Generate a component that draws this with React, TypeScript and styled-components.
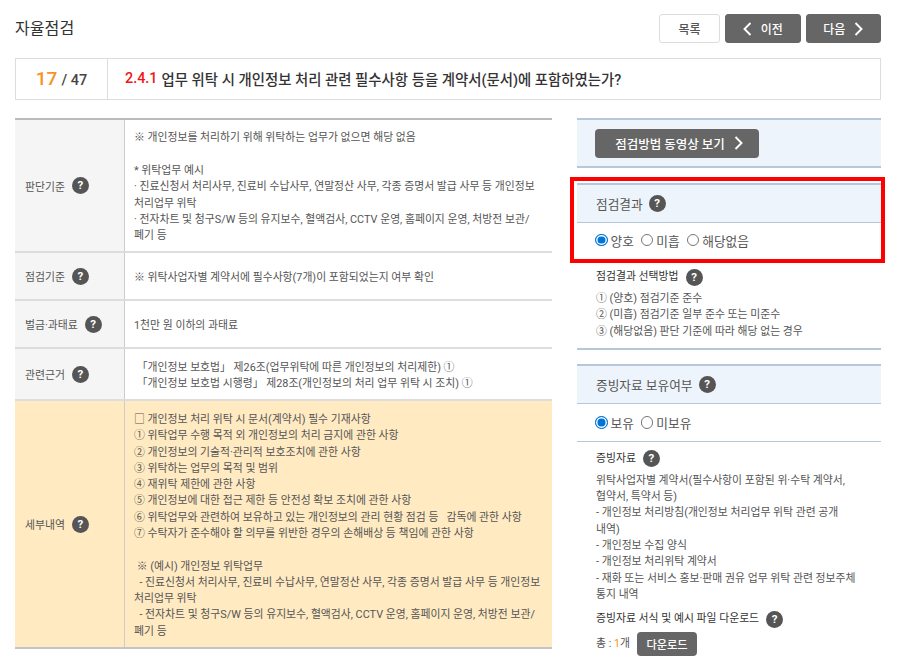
import React from "react";
import styled, { createGlobalStyle } from "styled-components";

const Global = createGlobalStyle`
  html, body { margin: 0; padding: 0; background: #fff; }
  body { font-family: Roboto, "Noto Sans CJK KR", sans-serif; color: #555; font-size: 10.85px; overflow: hidden; }
`;

const Page = styled.div`
  width: 866px;
  height: 671px;
  padding: 14px 16px 0 15px;
  overflow: hidden;
`;

const Top = styled.div`
  display: flex;
  justify-content: space-between;
  align-items: flex-start;
  height: 30px;
`;

const Title = styled.h1`
  margin: 0;
  font-size: 16.1px;
  line-height: 30px;
  font-weight: 400;
  color: #333;
`;

const Buttons = styled.div`
  display: flex;
  gap: 5px;
`;

const NavButton = styled.button<{ $light?: boolean }>`
  width: ${(p) => (p.$light ? 61 : 75.5)}px;
  height: 29px;
  box-sizing: border-box;
  border-radius: 3px;
  border: 1px solid ${(p) => (p.$light ? "#ddd" : "#666")};
  background: ${(p) => (p.$light ? "#fff" : "#666")};
  color: ${(p) => (p.$light ? "#555" : "#fff")};
  font: 500 12px Roboto, "Noto Sans CJK KR", sans-serif;
  display: flex;
  align-items: center;
  justify-content: center;
  gap: 9px;
  padding: 0;
`;

const Question = styled.div`
  display: flex;
  height: 42px;
  box-sizing: border-box;
  margin-top: 14px;
  border: 1px solid #ddd;
  align-items: stretch;
`;

const Counter = styled.div`
  width: 91px;
  border-right: 1px solid #ddd;
  display: flex;
  align-items: baseline;
  justify-content: center;
  font-size: 14.5px;
  line-height: 40px;
  font-weight: 500;
  color: #444;
  gap: 4px;
  b { color: #f7931e; font-size: 19px; font-weight: 500; }
`;

const QuestionText = styled.div`
  flex: 1;
  display: flex;
  align-items: center;
  padding: 0 0 1px 17px;
  font-size: 14.4px;
  font-weight: 500;
  color: #333;
  span { color: #f01414; margin-right: 4px; }
`;

const Columns = styled.div`
  display: flex;
  gap: 25px;
  margin-top: 18px;
  align-items: flex-start;
`;

const Table = styled.div`
  width: 537px;
  border-top: 2px solid #bbb;
`;

const Row = styled.div<{ $h: number; $accent?: boolean }>`
  display: flex;
  min-height: ${(p) => p.$h}px;
  border-bottom: ${(p) => (p.$accent ? "2px solid #c4c4c4" : "2px solid #ddd")};
  background: ${(p) => (p.$accent ? "#ffeac2" : "#fff")};
`;

const Label = styled.div<{ $accent?: boolean }>`
  width: 110px;
  flex: none;
  background: ${(p) => (p.$accent ? "#ffeac2" : "#f5f5f5")};
  border-right: 1px solid #ccc;
  display: flex;
  align-items: center;
  padding-left: 10px;
  box-sizing: border-box;
  gap: 7px;
`;

const Cell = styled.div`
  flex: 1;
  padding: 4px 9px 0;
  line-height: 16.3px;
  display: flex;
  flex-direction: column;
  justify-content: center;
  white-space: pre-wrap;
  color: #555;
`;

const Help = styled.span`
  width: 17px;
  height: 17px;
  flex: none;
  border-radius: 50%;
  background: #555;
  color: #fff;
  font-size: 11.5px;
  line-height: 17px;
  font-weight: 700;
  display: inline-flex;
  align-items: center;
  justify-content: center;
  &::before { content: "?"; }
`;

const Side = styled.div`
  width: 304px;
`;

const VideoBox = styled.div`
  height: 50px;
  box-sizing: border-box;
  background: #eef4fb;
  border-top: 2px solid #b5c7d8;
  border-bottom: 2px solid #b5c7d8;
  display: flex;
  align-items: center;
  padding-left: 18px;
`;

const DarkButton = styled.button`
  width: 164px;
  height: 29px;
  border: 0;
  border-radius: 4px;
  background: #666;
  color: #fff;
  font: 500 12.5px Roboto, "Noto Sans CJK KR", sans-serif;
  display: flex;
  align-items: center;
  justify-content: center;
  gap: 9px;
  padding: 0 0 0 4px;
`;

const Panel = styled.section<{ $mt: number }>`
  position: relative;
  margin-top: ${(p) => p.$mt}px;
`;

const RedFrame = styled.div`
  position: absolute;
  left: -7px;
  right: -4px;
  top: -6px;
  bottom: -5px;
  border: 4px solid #f00;
  pointer-events: none;
`;

const PanelHead = styled.div`
  height: 40px;
  box-sizing: border-box;
  background: #eef4fb;
  border-top: 2px solid #b5c7d8;
  border-bottom: 1px solid #b5c7d8;
  display: flex;
  align-items: center;
  gap: 6px;
  padding-left: 19px;
  font-size: 12.7px;
  color: #555;
`;

const Radios = styled.div<{ $border?: boolean }>`
  height: ${(p) => (p.$border ? 38 : 35)}px;
  box-sizing: border-box;
  display: flex;
  align-items: center;
  padding: 0 0 ${(p) => (p.$border ? 0 : 1)}px 18px;
  gap: 7px;
  font-size: 12.7px;
  color: #555;
  border-bottom: ${(p) => (p.$border ? "1px solid #b5c7d8" : "0")};
`;

const RadioLabel = styled.label`
  display: flex;
  align-items: center;
  gap: 3px;
`;

const RadioDot = styled.span<{ $on?: boolean }>`
  width: 12.5px;
  height: 12.5px;
  box-sizing: border-box;
  border-radius: 50%;
  border: 1px solid ${(p) => (p.$on ? "#0075d8" : "#767676")};
  background: ${(p) => (p.$on ? "#0075d8" : "#fff")};
  box-shadow: ${(p) => (p.$on ? "inset 0 0 0 1.5px #fff" : "none")};
`;

const Block = styled.div<{ $border?: boolean; $pt: number; $pb?: number }>`
  padding: ${(p) => p.$pt}px 0 ${(p) => p.$pb ?? 0}px 19px;
  line-height: 16.3px;
  border-bottom: ${(p) => (p.$border ? "2px solid #b5c7d8" : "0")};
`;

const SubTitle = styled.div`
  display: flex;
  align-items: center;
  gap: 7px;
  height: 18px;
  color: #333;
  margin-bottom: 5px;
`;

const BlockText = styled.div`
  width: 270px;
  color: #555;
`;

const Total = styled.div`
  display: flex;
  align-items: center;
  gap: 7px;
  margin-top: -1px;
  b { color: #f7931e; font-weight: 400; }
`;

const SmallButton = styled.button`
  width: 60px;
  height: 24px;
  border: 0;
  border-radius: 4px;
  background: #666;
  color: #fff;
  padding: 0;
  font: 500 11.2px Roboto, "Noto Sans CJK KR", sans-serif;
`;

const Chevron = ({ left }: { left?: boolean }) => (
  <svg width="9" height="14" viewBox="0 0 9 14" fill="none" stroke="#fff" strokeWidth="1.9">
    <path d={left ? "M7.5 1 1.5 7l6 6" : "M1.5 1l6 6-6 6"} />
  </svg>
);

const rows = [
  {
    name: "판단기준",
    h: 131,
    text: "※ 개인정보를 처리하기 위해 위탁하는 업무가 없으면 해당 없음\n\n* 위탁업무 예시\n· 진료신청서 처리사무, 진료비 수납사무, 연말정산 사무, 각종 증명서 발급 사무 등 개인정보\n처리업무 위탁\n· 전자차트 및 청구S/W 등의 유지보수, 혈액검사, CCTV 운영, 홈페이지 운영, 처방전 보관/\n폐기 등",
  },
  { name: "점검기준", h: 46, text: "※ 위탁사업자별 계약서에 필수사항(7개)이 포함되었는지 여부 확인" },
  { name: "벌금·과태료", h: 46, text: "1천만 원 이하의 과태료" },
  {
    name: "관련근거",
    h: 50,
    text: " 「개인정보 보호법」 제26조(업무위탁에 따른 개인정보의 처리제한) ①\n 「개인정보 보호법 시행령」 제28조(개인정보의 처리 업무 위탁 시 조치) ①",
  },
  {
    name: "세부내역",
    h: 246,
    accent: true,
    text: "□ 개인정보 처리 위탁 시 문서(계약서) 필수 기재사항\n① 위탁업무 수행 목적 외 개인정보의 처리 금지에 관한 사항\n② 개인정보의 기술적·관리적 보호조치에 관한 사항\n③ 위탁하는 업무의 목적 및 범위\n④ 재위탁 제한에 관한 사항\n⑤ 개인정보에 대한 접근 제한 등 안전성 확보 조치에 관한 사항\n⑥ 위탁업무와 관련하여 보유하고 있는 개인정보의 관리 현황 점검 등   감독에 관한 사항\n⑦ 수탁자가 준수해야 할 의무를 위반한 경우의 손해배상 등 책임에 관한 사항\n\n ※ (예시) 개인정보 위탁업무\n  - 진료신청서 처리사무, 진료비 수납사무, 연말정산 사무, 각종 증명서 발급 사무 등 개인정보\n처리업무 위탁\n  - 전자차트 및 청구S/W 등의 유지보수, 혈액검사, CCTV 운영, 홈페이지 운영, 처방전 보관/\n폐기 등",
  },
];

export default function App() {
  return (
    <Page>
      <Global />
      <Top>
        <Title>자율점검</Title>
        <Buttons>
          <NavButton $light>목록</NavButton>
          <NavButton><Chevron left />이전</NavButton>
          <NavButton>다음<Chevron /></NavButton>
        </Buttons>
      </Top>
      <Question>
        <Counter><b>17</b> / 47</Counter>
        <QuestionText><span>2.4.1</span>업무 위탁 시 개인정보 처리 관련 필수사항 등을 계약서(문서)에 포함하였는가?</QuestionText>
      </Question>
      <Columns>
        <Table>
          {rows.map((r) => (
            <Row key={r.name} $h={r.h} $accent={r.accent}>
              <Label $accent={r.accent}>{r.name}<Help /></Label>
              <Cell>{r.text}</Cell>
            </Row>
          ))}
        </Table>
        <Side>
          <VideoBox>
            <DarkButton>점검방법 동영상 보기<Chevron /></DarkButton>
          </VideoBox>
          <Panel $mt={15}>
            <PanelHead>점검결과<Help /></PanelHead>
            <Radios>
              <RadioLabel><RadioDot $on />양호</RadioLabel>
              <RadioLabel><RadioDot />미흡</RadioLabel>
              <RadioLabel><RadioDot />해당없음</RadioLabel>
            </Radios>
            <RedFrame />
          </Panel>
          <Block $pt={10} $pb={8} $border>
            <SubTitle>점검결과 선택방법<Help /></SubTitle>
            <BlockText>
              ① (양호) 점검기준 준수<br />
              ② (미흡) 점검기준 일부 준수 또는 미준수<br />
              ③ (해당없음) 판단 기준에 따라 해당 없는 경우
            </BlockText>
          </Block>
          <Panel $mt={14}>
            <PanelHead>증빙자료 보유여부<Help /></PanelHead>
            <Radios $border>
              <RadioLabel><RadioDot $on />보유</RadioLabel>
              <RadioLabel><RadioDot />미보유</RadioLabel>
            </Radios>
          </Panel>
          <Block $pt={8}>
            <SubTitle>증빙자료<Help /></SubTitle>
            <BlockText>
              위탁사업자별 계약서(필수사항이 포함된 위·수탁 계약서,<br />
              협약서, 특약서 등)<br />
              - 개인정보 처리방침(개인정보 처리업무 위탁 관련 공개<br />
              내역)<br />
              - 개인정보 수집 양식<br />
              - 개인정보 처리위탁 계약서<br />
              - 재화 또는 서비스 홍보·판매 권유 업무 위탁 관련 정보주체<br />
              통지 내역
            </BlockText>
          </Block>
          <Block $pt={7}>
            <SubTitle>증빙자료 서식 및 예시 파일 다운로드<Help /></SubTitle>
            <Total><span>총 : <b>1</b>개</span><SmallButton>다운로드</SmallButton></Total>
          </Block>
        </Side>
      </Columns>
    </Page>
  );
}
